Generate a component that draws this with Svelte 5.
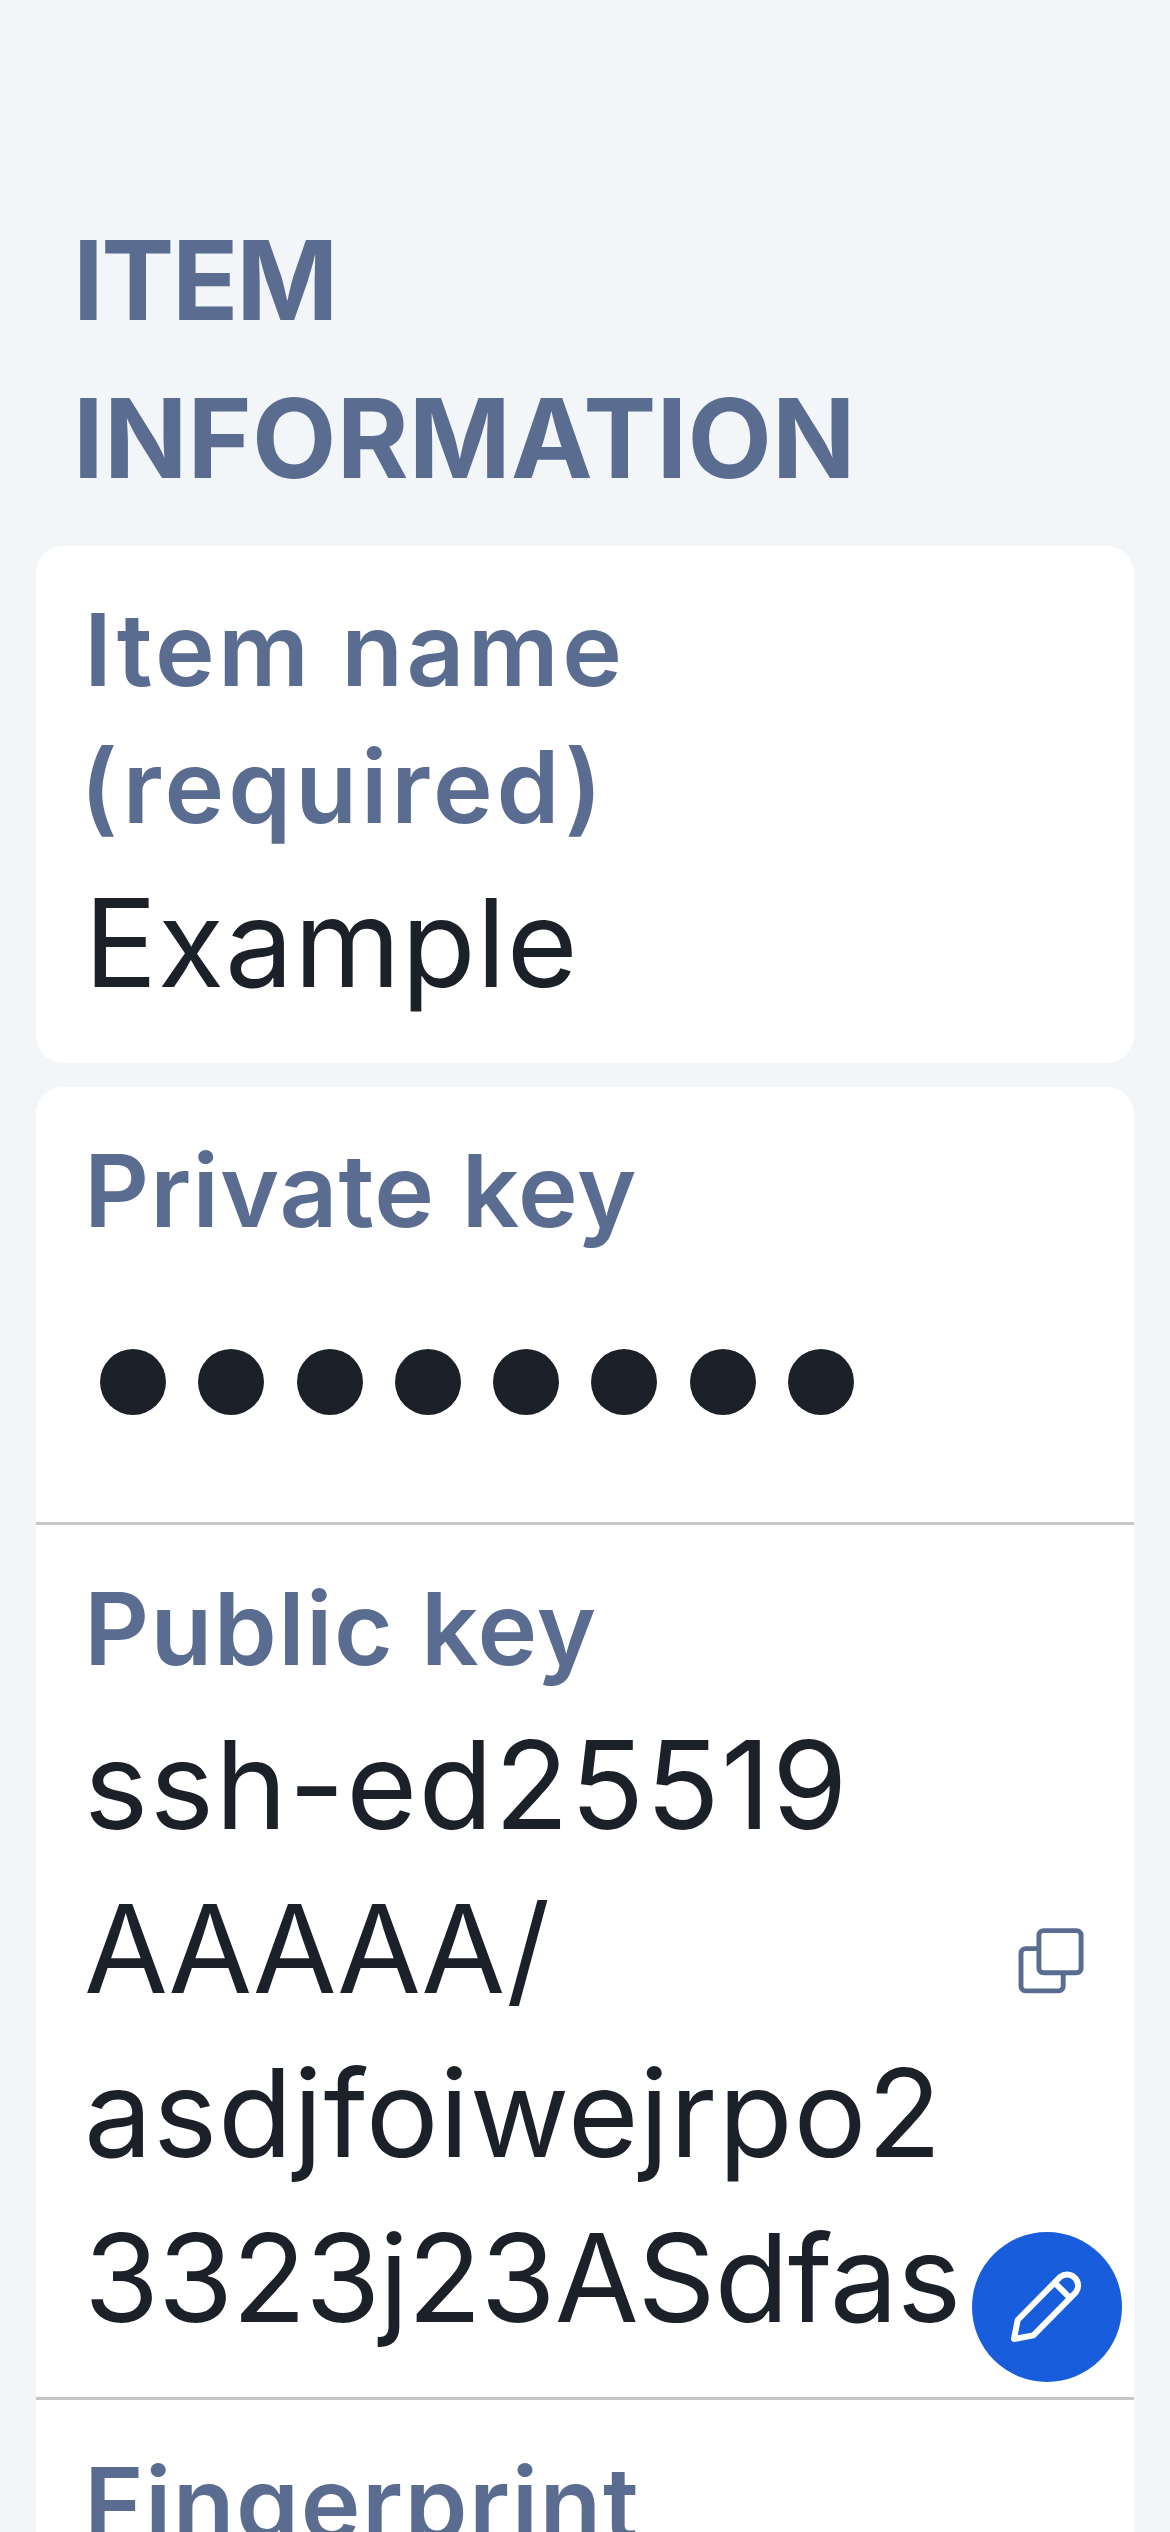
<script>
  // Each line of text carries its own tracking, in pixels.
  const heading = [
    { text: 'ITEM', track: -2.4 },
    { text: 'INFORMATION', track: 0.2 }
  ];
  const nameLabel = [
    { text: 'Item name', track: 3.4 },
    { text: '(required)', track: 3.9, hang: true }
  ];
  const publicKey = [
    { text: 'ssh-ed25519', track: 1.45 },
    { text: 'AAAAA/', track: -1.4 },
    { text: 'asdjfoiwejrpo2', track: 0.75 },
    { text: '3323j23ASdfas', track: -1.13 }
  ];
  const dots = Array.from({ length: 8 });
</script>

{#snippet lines(items)}
  {#each items as l}
    <span class="line" class:hang={l.hang} style="letter-spacing: {l.track}px">{l.text}</span>
  {/each}
{/snippet}

<main class="screen">
  <h1>{@render lines(heading)}</h1>

  <section class="card">
    <div class="row name">
      <div class="field">
        <div class="label">{@render lines(nameLabel)}</div>
        <div class="value">{@render lines([{ text: 'Example', track: 0.7 }])}</div>
      </div>
    </div>
  </section>

  <section class="card">
    <div class="row">
      <div class="field">
        <div class="label">{@render lines([{ text: 'Private key', track: 1.1 }])}</div>
        <div class="dots" aria-label="Hidden">
          {#each dots as _}<i></i>{/each}
        </div>
      </div>
    </div>
    <div class="row">
      <div class="field">
        <div class="label">{@render lines([{ text: 'Public key', track: 1.4 }])}</div>
        <div class="value">{@render lines(publicKey)}</div>
      </div>
      <button class="copy" aria-label="Copy">
        <svg viewBox="0 0 66 66" fill="none" stroke="#5a6d91" stroke-width="4.9">
          <rect x="20.9" y="2.6" width="42.2" height="42.2" rx="4.6" />
          <path d="M20.9 20.6H7.6A4.6 4.6 0 0 0 3 25.2V58.3A4.6 4.6 0 0 0 7.6 62.9H40.6A4.6 4.6 0 0 0 45.2 58.3V44.6" />
        </svg>
      </button>
    </div>
    <div class="row">
      <div class="field">
        <div class="label">{@render lines([{ text: 'Fingerprint', track: 1.5 }])}</div>
      </div>
    </div>
  </section>

  <button class="fab" aria-label="Edit">
    <svg viewBox="0 0 450 450" fill="none" stroke="#fff" stroke-width="18" stroke-linejoin="round">
      <path d="M126 321L137 264L264.7 134.7A33.2 33.2 0 0 1 311.3 181.3L184 310Z" />
      <path d="M249 153L293 197" />
    </svg>
  </button>
</main>

<style>
  :global(body) {
    margin: 0;
    background: #f2f6f9;
  }
  .screen {
    position: relative;
    box-sizing: border-box;
    width: 1170px;
    height: 2532px;
    overflow: hidden;
    padding: 201px 36px 0;
    background: #f2f6f9;
    font-family: Inter, 'Liberation Sans', sans-serif;
  }
  h1 {
    margin: 0 0 29px;
    padding-left: 37px;
    font-size: 109.5px;
    font-weight: 700;
    line-height: 158px;
    color: #5a6d91;
  }
  .line {
    display: block;
    white-space: nowrap;
  }
  .hang {
    margin-left: -4px;
  }
  .card {
    margin-bottom: 24px;
    border-radius: 27px;
    background: #fff;
  }
  .row {
    display: flex;
    align-items: center;
    justify-content: space-between;
    box-sizing: border-box;
    padding: 35px 50px 0 48px;
    height: 435px;
  }
  .row.name {
    height: 517px;
  }
  .row + .row {
    border-top: 3px solid #c6c6c6;
    height: 875px;
  }
  .field {
    align-self: flex-start;
  }
  .label {
    font-size: 101px;
    font-weight: 600;
    line-height: 137px;
    color: #5a6d91;
  }
  .value {
    padding-top: 5.6px;
    font-size: 121.7px;
    line-height: 164.33px;
    color: #1b2029;
  }
  .dots {
    display: flex;
    gap: 32.3px;
    padding: 90px 0 0 16px;
  }
  .dots i {
    width: 66px;
    height: 66px;
    border-radius: 50%;
    background: #1b2029;
  }
  button {
    border: 0;
    padding: 0;
    background: none;
  }
  svg {
    display: block;
  }
  .copy {
    width: 66px;
    height: 66px;
    margin-top: -35px;
  }
  .fab {
    position: absolute;
    left: 972px;
    top: 2232px;
    width: 150px;
    height: 150px;
    border-radius: 50%;
    background: #175ddc;
  }
</style>
